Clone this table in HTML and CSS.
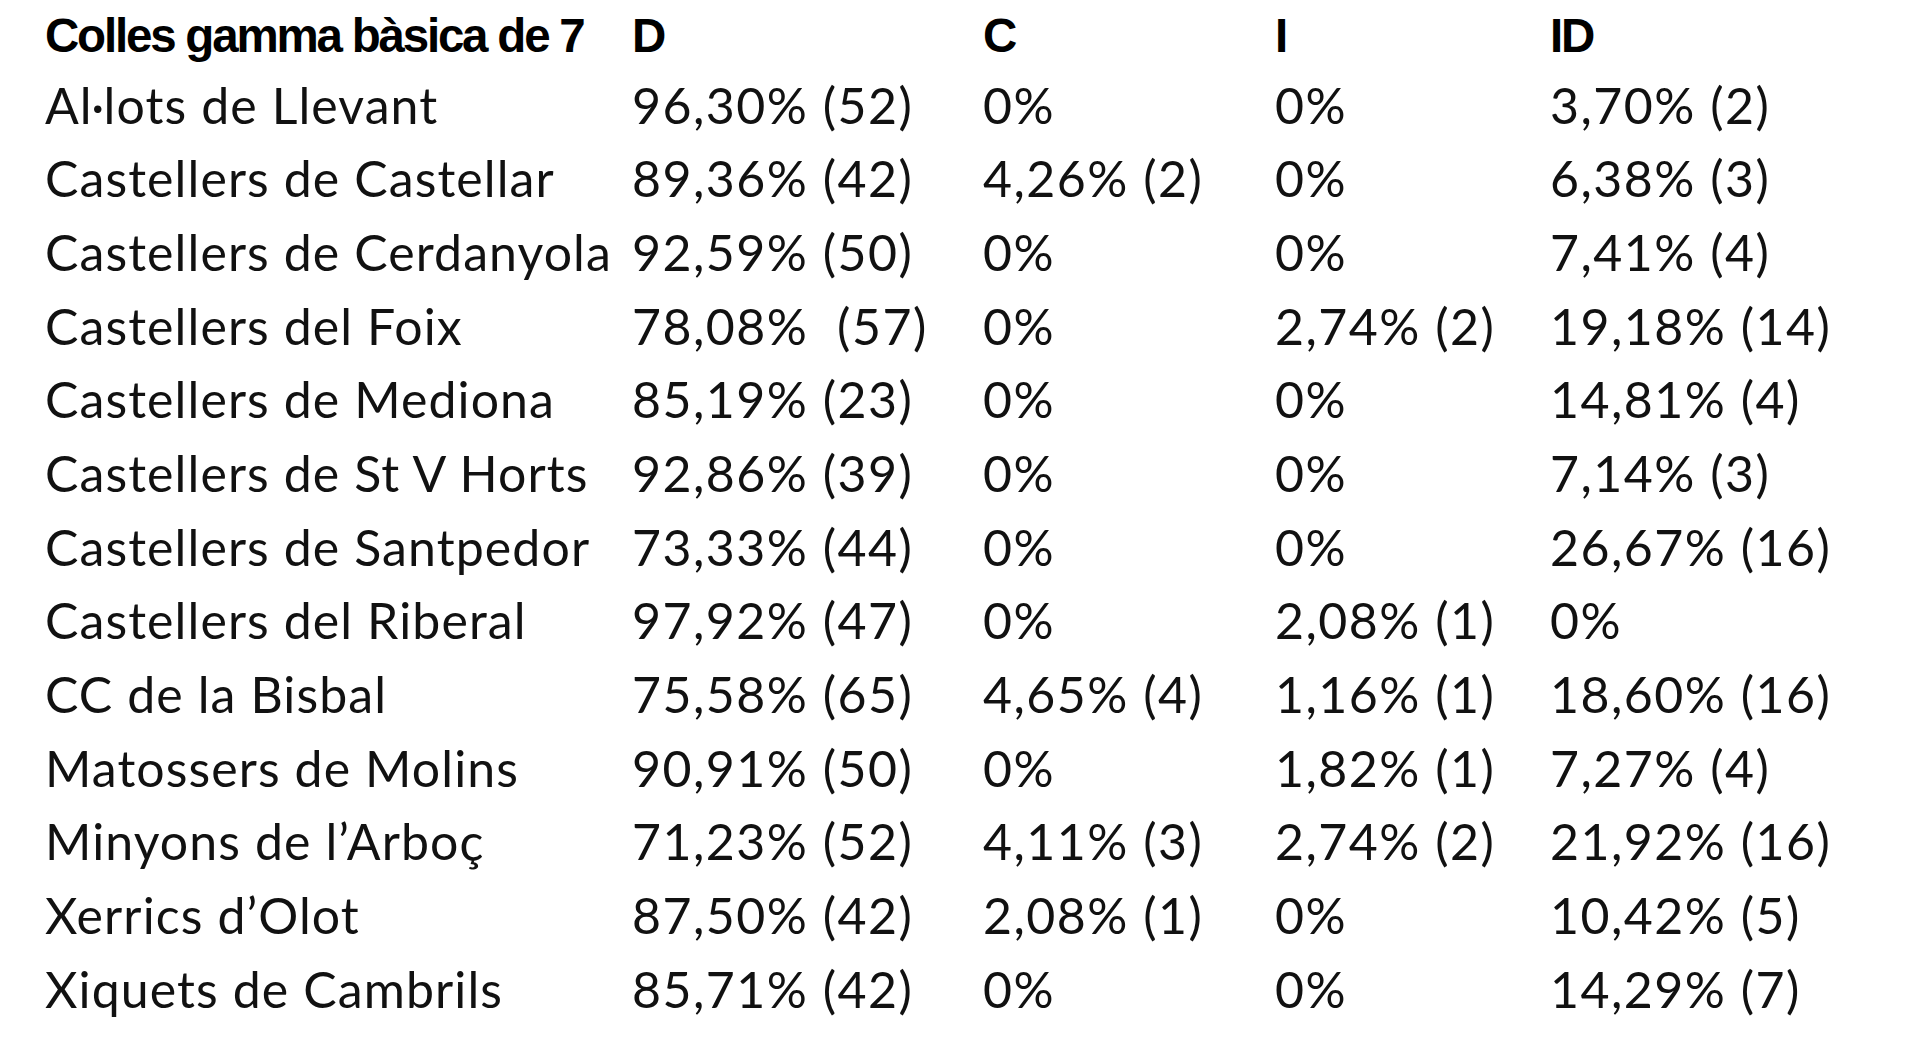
FILE: index.html
```html
<!DOCTYPE html>
<html lang="ca">
<head>
<meta charset="utf-8">
<title>Colles gamma bàsica de 7</title>
<link rel="stylesheet" href="styles.css">
</head>
<body>
<div class="sheet">
  <div class="row head">
    <div class="cell name">Colles gamma bàsica de 7</div>
    <div class="cell">D</div>
    <div class="cell">C</div>
    <div class="cell">I</div>
    <div class="cell">ID</div>
  </div>
  <div class="row"><div class="cell name">Al·lots de Llevant</div><div class="cell">96,30% (52)</div><div class="cell">0%</div><div class="cell">0%</div><div class="cell">3,70% (2)</div></div>
  <div class="row"><div class="cell name">Castellers de Castellar</div><div class="cell">89,36% (42)</div><div class="cell">4,26% (2)</div><div class="cell">0%</div><div class="cell">6,38% (3)</div></div>
  <div class="row"><div class="cell name">Castellers de Cerdanyola</div><div class="cell">92,59% (50)</div><div class="cell">0%</div><div class="cell">0%</div><div class="cell">7,41% (4)</div></div>
  <div class="row"><div class="cell name">Castellers del Foix</div><div class="cell">78,08%  (57)</div><div class="cell">0%</div><div class="cell">2,74% (2)</div><div class="cell">19,18% (14)</div></div>
  <div class="row"><div class="cell name">Castellers de Mediona</div><div class="cell">85,19% (23)</div><div class="cell">0%</div><div class="cell">0%</div><div class="cell">14,81% (4)</div></div>
  <div class="row"><div class="cell name">Castellers de St V Horts</div><div class="cell">92,86% (39)</div><div class="cell">0%</div><div class="cell">0%</div><div class="cell">7,14% (3)</div></div>
  <div class="row"><div class="cell name">Castellers de Santpedor</div><div class="cell">73,33% (44)</div><div class="cell">0%</div><div class="cell">0%</div><div class="cell">26,67% (16)</div></div>
  <div class="row"><div class="cell name">Castellers del Riberal</div><div class="cell">97,92% (47)</div><div class="cell">0%</div><div class="cell">2,08% (1)</div><div class="cell">0%</div></div>
  <div class="row"><div class="cell name">CC de la Bisbal</div><div class="cell">75,58% (65)</div><div class="cell">4,65% (4)</div><div class="cell">1,16% (1)</div><div class="cell">18,60% (16)</div></div>
  <div class="row"><div class="cell name">Matossers de Molins</div><div class="cell">90,91% (50)</div><div class="cell">0%</div><div class="cell">1,82% (1)</div><div class="cell">7,27% (4)</div></div>
  <div class="row"><div class="cell name">Minyons de l’Arboç</div><div class="cell">71,23% (52)</div><div class="cell">4,11% (3)</div><div class="cell">2,74% (2)</div><div class="cell">21,92% (16)</div></div>
  <div class="row"><div class="cell name">Xerrics d’Olot</div><div class="cell">87,50% (42)</div><div class="cell">2,08% (1)</div><div class="cell">0%</div><div class="cell">10,42% (5)</div></div>
  <div class="row"><div class="cell name">Xiquets de Cambrils</div><div class="cell">85,71% (42)</div><div class="cell">0%</div><div class="cell">0%</div><div class="cell">14,29% (7)</div></div>
</div>
</body>
</html>
```

FILE: styles.css
```css
html, body {
  margin: 0;
  padding: 0;
  background: #ffffff;
}

body {
  color: #111111;
  font-family: Lato, "Noto Sans", sans-serif;
  font-size: 50px;
}

.sheet {
  padding: 5px 0 0 45px;
}

.row {
  display: grid;
  grid-template-columns: 587px 351px 292px 275px 1fr;
  height: 73.7px;
  line-height: 73.7px;
  white-space: pre;
  letter-spacing: 1.5px;
}

.row .name {
  letter-spacing: 1.1px;
}

.row.head {
  height: 63.5px;
  line-height: 61.3px;
  font-family: "Liberation Sans", Arial, sans-serif;
  font-weight: 700;
  font-size: 47.5px;
  letter-spacing: -2.2px;
  color: #000000;
}

.row.head .name {
  letter-spacing: -2.2px;
}
```
